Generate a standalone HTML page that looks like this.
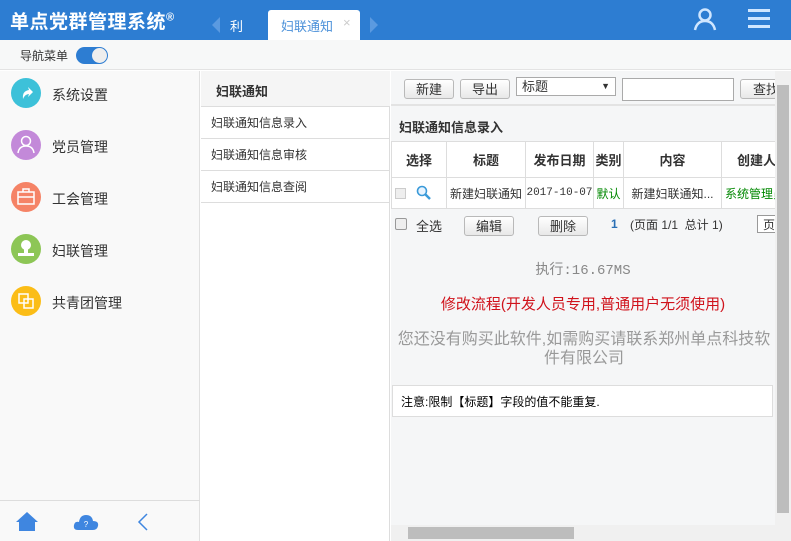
<!DOCTYPE html>
<html><head><meta charset="utf-8"><style>
*{margin:0;padding:0;box-sizing:border-box}
body{width:791px;height:541px;overflow:hidden;position:relative;background:#fff;font-family:"Liberation Sans","Noto Sans CJK SC",sans-serif;font-size:13px;color:#333}
.a{position:absolute}
.hdr{left:0;top:0;width:791px;height:40px;background:#2d7dd2}
.btn{position:absolute;border:1px solid #b9b9b9;border-radius:3px;background:linear-gradient(#fff,#e8e8e8);font-size:13px;text-align:center;line-height:19px;color:#333}
td,th{border:1px solid #ddd;font-size:12px;text-align:center;white-space:nowrap;overflow:hidden}
th{font-weight:bold;height:36px;font-size:13px}
td{height:31px}
.ic{position:absolute;left:11px;width:30px;height:30px;border-radius:50%}
.ic svg{position:absolute;left:0;top:0}
</style></head><body>
<div class="a hdr"></div>
<div class="a" style="left:10px;top:7px;color:#fff;font-size:19px;font-weight:bold;letter-spacing:0.5px">单点党群管理系统<sup style="font-size:11px">®</sup></div>
<div class="a" style="left:212px;top:17px;width:0;height:0;border-top:8px solid transparent;border-bottom:8px solid transparent;border-right:8px solid #5b9ae0"></div>
<div class="a" style="left:230px;top:16px;color:#fff;font-size:13px">利</div>
<div class="a" style="left:268px;top:10px;width:92px;height:30px;background:#fff;border-radius:3px 3px 0 0"></div>
<div class="a" style="left:281px;top:16px;color:#4a90d9;font-size:13px">妇联通知</div>
<div class="a" style="left:343px;top:15px;color:#ccc;font-size:13px">×</div>
<div class="a" style="left:370px;top:17px;width:0;height:0;border-top:8px solid transparent;border-bottom:8px solid transparent;border-left:8px solid #5b9ae0"></div>
<svg class="a" style="left:692px;top:7px" width="26" height="24" viewBox="0 0 26 24"><circle cx="13" cy="8" r="5.5" fill="none" stroke="#cfe6ff" stroke-width="2.5"/><path d="M3 23 Q5 14 13 14 Q21 14 23 23" fill="none" stroke="#cfe6ff" stroke-width="2.5"/></svg>
<div class="a" style="left:748px;top:9px;width:22px;height:3px;background:#cfe6ff;box-shadow:0 8px 0 #cfe6ff,0 16px 0 #cfe6ff"></div>
<div class="a" style="left:0;top:40px;width:791px;height:30px;background:#f7f8f8;border-bottom:1px solid #e3e3e3"></div>
<div class="a" style="left:20px;top:47px;font-size:12px;color:#333">导航菜单</div>
<div class="a" style="left:76px;top:47px;width:32px;height:17px;border-radius:9px;background:#2d7dd2"></div>
<div class="a" style="left:92px;top:48px;width:15px;height:15px;border-radius:50%;background:#eee"></div>
<div class="a" style="left:0;top:71px;width:200px;height:470px;background:#f9f9f9;border-right:1px solid #e0e0e0"></div>
<div class="ic" style="top:78px;background:#3dc1d9"><svg width="30" height="30"><path d="M12 21 Q11 13 18 12 L17 9 L22 14 L17 19 L18 16 Q14 16 12 21Z" fill="#fff"/></svg></div>
<div class="ic" style="top:130px;background:#c389d9"><svg width="30" height="30"><circle cx="15" cy="11" r="4.5" fill="none" stroke="#fff" stroke-width="1.5"/><path d="M7 23 Q8 16 15 16 Q22 16 23 23" fill="none" stroke="#fff" stroke-width="1.5"/></svg></div>
<div class="ic" style="top:182px;background:#f58366"><svg width="30" height="30"><rect x="7" y="10" width="16" height="12" fill="none" stroke="#fff" stroke-width="1.5"/><path d="M12 10 V7 H18 V10 M7 15 H23" fill="none" stroke="#fff" stroke-width="1.5"/></svg></div>
<div class="ic" style="top:234px;background:#8dc656"><svg width="30" height="30"><circle cx="15" cy="11" r="5" fill="#fff"/><rect x="13" y="14" width="4" height="5" fill="#fff"/><rect x="7" y="19" width="16" height="3" fill="#fff"/></svg></div>
<div class="ic" style="top:286px;background:#fbbd17"><svg width="30" height="30"><rect x="8" y="8" width="9" height="9" fill="none" stroke="#fff" stroke-width="1.5"/><rect x="13" y="13" width="9" height="9" fill="none" stroke="#fff" stroke-width="1.5"/></svg></div>
<div class="a" style="left:52px;top:85px;font-size:14px">系统设置</div>
<div class="a" style="left:52px;top:137px;font-size:14px">党员管理</div>
<div class="a" style="left:52px;top:189px;font-size:14px">工会管理</div>
<div class="a" style="left:52px;top:241px;font-size:14px">妇联管理</div>
<div class="a" style="left:52px;top:293px;font-size:14px">共青团管理</div>
<div class="a" style="left:0;top:500px;width:200px;height:1px;background:#ddd"></div>
<svg class="a" style="left:15px;top:511px" width="24" height="20" viewBox="0 0 24 20"><path d="M12 1 L23 11 L20 11 L20 20 L4 20 L4 11 L1 11 Z" fill="#3f86e0"/></svg>
<svg class="a" style="left:73px;top:513px" width="26" height="17" viewBox="0 0 26 17"><path d="M5 17 Q0 17 1 12 Q2 8 6 9 Q7 2 13 2 Q19 2 20 8 Q26 8 25 13 Q24 17 20 17 Z" fill="#3f86e0"/><text x="13" y="14" font-size="8" fill="#fff" text-anchor="middle">?</text></svg>
<svg class="a" style="left:137px;top:513px" width="12" height="18" viewBox="0 0 12 18"><path d="M10 1 L2 9 L10 17" fill="none" stroke="#3f86e0" stroke-width="1.5"/></svg>
<div class="a" style="left:200px;top:71px;width:190px;height:470px;background:#fff;border-right:1px solid #ddd"></div>
<div class="a" style="left:201px;top:71px;width:189px;height:36px;background:#f5f5f5;border-bottom:1px solid #ddd;padding:10px 0 0 15px;font-weight:bold;font-size:13px">妇联通知</div>
<div class="a" style="left:201px;top:107px;width:189px;height:96px;border-right:1px solid #ddd">
<div style="height:32px;border-bottom:1px solid #ddd;padding:7px 0 0 10px;font-size:12px">妇联通知信息录入</div>
<div style="height:32px;border-bottom:1px solid #ddd;padding:7px 0 0 10px;font-size:12px">妇联通知信息审核</div>
<div style="height:32px;border-bottom:1px solid #ddd;padding:7px 0 0 10px;font-size:12px">妇联通知信息查阅</div></div>
<div class="a" style="left:391px;top:71px;width:384px;height:454px;background:#f5f6f7"></div>
<div class="a" style="left:391px;top:104px;width:384px;height:2px;background:#e3e3e3"></div>
<div class="btn" style="left:404px;top:79px;width:50px;height:20px">新建</div>
<div class="btn" style="left:460px;top:79px;width:50px;height:20px">导出</div>
<div class="a" style="left:516px;top:77px;width:100px;height:19px;border:1px solid #aaa;background:#fff;font-size:13px;padding-left:5px;line-height:17px">标题<span style="position:absolute;right:5px;font-size:9px">▼</span></div>
<div class="a" style="left:622px;top:78px;width:112px;height:23px;border:1px solid #aaa;background:#fff"></div>
<div class="btn" style="left:740px;top:79px;width:50px;height:20px;text-align:left;padding-left:12px">查找</div>
<div class="a" style="left:399px;top:117px;font-weight:bold;font-size:13px">妇联通知信息录入</div>
<table class="a" style="left:391px;top:141px;border-collapse:collapse;background:#fff;table-layout:fixed;width:400px">
<colgroup><col style="width:55px"><col style="width:79px"><col style="width:68px"><col style="width:30px"><col style="width:98px"><col style="width:70px"></colgroup>
<tr><th>选择</th><th>标题</th><th>发布日期</th><th>类别</th><th>内容</th><th>创建人</th></tr>
<tr><td style="text-align:left;padding-left:3px"><span style="display:inline-block;width:11px;height:11px;border:1px solid #ccc;background:#eee;vertical-align:middle"></span> <svg width="18" height="16" style="vertical-align:middle;margin-left:6px"><circle cx="7" cy="6" r="4.5" fill="#e8f4ff" stroke="#3a9ad9" stroke-width="1.6"/><path d="M10.5 9.5 L15 14" stroke="#3a9ad9" stroke-width="2.5"/></svg></td><td>新建妇联通知</td><td style="font-family:'Liberation Mono',monospace;font-size:11px">2017-10-07</td><td style="color:#080">默认</td><td>新建妇联通知...</td><td style="color:#080;text-align:left;padding-left:3px">系统管理员</td></tr>
</table>
<div class="a" style="left:395px;top:218px;width:12px;height:12px;border:1px solid #999;background:#eee;border-radius:2px"></div>
<div class="a" style="left:416px;top:216px;font-size:13px">全选</div>
<div class="btn" style="left:464px;top:216px;width:50px;height:20px">编辑</div>
<div class="btn" style="left:538px;top:216px;width:50px;height:20px">删除</div>
<div class="a" style="left:611px;top:217px;font-size:12px;color:#2a6fb5;font-weight:bold">1</div>
<div class="a" style="left:630px;top:216px;font-size:12px">(页面 1/1&nbsp;&nbsp;总计 1)</div>
<div class="a" style="left:757px;top:215px;width:20px;height:18px;border:1px solid #999;background:#fff;font-size:12px;padding-left:5px">页</div>
<div class="a" style="left:391px;top:259px;width:384px;text-align:center;font-size:14px;color:#888;font-family:'Liberation Mono','Noto Sans CJK SC',monospace">执行:16.67MS</div>
<div class="a" style="left:391px;top:293px;width:384px;text-align:center;font-size:15px;color:#d0121b">修改流程(开发人员专用,普通用户无须使用)</div>
<div class="a" style="left:393px;top:330px;width:382px;text-align:center;font-size:16px;color:#999;line-height:19px">您还没有购买此软件,如需购买请联系郑州单点科技软件有限公司</div>
<div class="a" style="left:392px;top:385px;width:381px;height:32px;background:#fff;border:1px solid #ddd;padding:7px 0 0 8px;font-size:12px;color:#000">注意:限制【标题】字段的值不能重复.</div>
<div class="a" style="left:775px;top:71px;width:16px;height:470px;background:#f0f0f0"></div>
<div class="a" style="left:777px;top:85px;width:12px;height:428px;background:#bdbdbd"></div>
<div class="a" style="left:391px;top:525px;width:384px;height:16px;background:#f0f0f0"></div>
<div class="a" style="left:408px;top:527px;width:166px;height:12px;background:#bdbdbd"></div>
</body></html>
